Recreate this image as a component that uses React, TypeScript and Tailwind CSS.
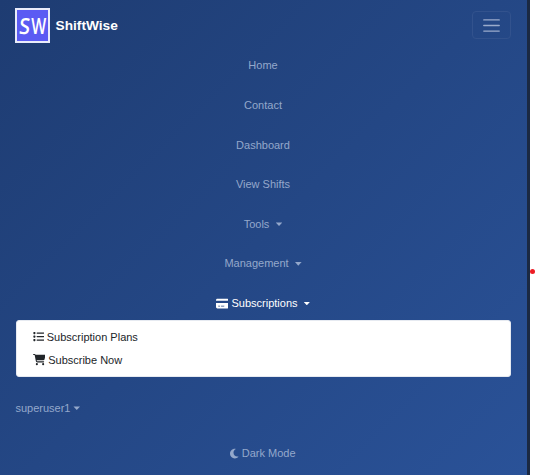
import { FaCreditCard, FaList, FaCartShopping, FaMoon } from "react-icons/fa6";

function Caret({ className = "" }: { className?: string }) {
  return (
    <span
      className={`inline-block h-[3.6px] w-[6.6px] bg-current [clip-path:polygon(0_0,100%_0,50%_100%)] ${className}`}
    />
  );
}

const links = [
  { label: "Home" },
  { label: "Contact" },
  { label: "Dashboard" },
  { label: "View Shifts" },
  { label: "Tools", menu: true },
  { label: "Management", menu: true },
];

export default function App() {
  return (
    <div className="flex h-[475px] w-[536px] overflow-hidden bg-white font-['Liberation_Sans',Arial,sans-serif] text-[11px] leading-[17px] text-[#94a8cb]">
      <nav className="flex w-[527px] shrink-0 flex-col bg-linear-[135deg] from-[#1e3c72] to-[#2a5298] pr-[16.4px] pl-[15.4px]">
        <header className="flex h-[50px] items-center justify-between">
          <a className="flex items-center gap-[5.2px] text-white">
            <span className="flex h-[35px] w-[35px] items-center justify-center border-2 border-[#e9ecfa] bg-[#5b5bf3]">
              <span className="flex scale-x-[0.9] gap-[2px] font-['Open_Sans',sans-serif] text-[22px] font-semibold leading-none">
                <span className="-skew-x-6">S</span>
                <span className="-mx-[3px] scale-x-[0.8]">W</span>
              </span>
            </span>
            <span className="pt-[2px] text-[13.7px] font-bold leading-[20px]">ShiftWise</span>
          </a>
          <button
            aria-label="Toggle navigation"
            className="-mr-[0.6px] flex h-[28px] w-[39px] items-center justify-center rounded-[4px] border border-[#32528d]"
          >
            <svg width="21" height="21" viewBox="0 0 30 30" fill="none" stroke="#9aabcc" strokeWidth="2" strokeLinecap="round">
              <path d="M4 7h22M4 15h22M4 23h22" />
            </svg>
          </button>
        </header>

        <ul className="flex flex-col pt-[7.4px]">
          {links.map((link) => (
            <li key={link.label} className="flex h-[39.6px] items-start justify-center">
              <a className="flex items-center">
                {link.label}
                {link.menu && <Caret className="ml-[6.4px]" />}
              </a>
            </li>
          ))}
          <li className="flex h-[25px] items-start justify-center text-white">
            <a className="flex items-center">
              <FaCreditCard className="mr-[3px] h-[11.2px] w-[12.6px]" />
              Subscriptions
              <Caret className="ml-[6px]" />
            </a>
          </li>
        </ul>

        <div className="ml-[0.6px] flex h-[57.4px] shrink-0 flex-col rounded-[3px] border border-[#e6eaf1] bg-white pt-[4.6px] pl-[15.6px] text-[#212529]">
          <a className="flex h-[23px] items-center gap-[3px]">
            <FaList className="h-[11.2px] w-[11.2px]" />
            Subscription Plans
          </a>
          <a className="flex h-[23px] items-center gap-[3px]">
            <FaCartShopping className="h-[11.2px] w-[12.6px]" />
            Subscribe Now
          </a>
        </div>

        <a className="mt-[22.4px] flex items-center">
          superuser1
          <Caret className="ml-[3px]" />
        </a>
        <a className="mt-[28px] flex items-center justify-center">
          <FaMoon className="mr-[3px] h-[11.2px] w-[8.4px]" />
          Dark Mode
        </a>
      </nav>
      <div className="w-[3px] shrink-0 bg-[#1b2942]" />
      <aside className="flex items-start pt-[269px]">
        <span className="h-[5px] w-[5px] rounded-full bg-[#ed1c24]" />
      </aside>
    </div>
  );
}
